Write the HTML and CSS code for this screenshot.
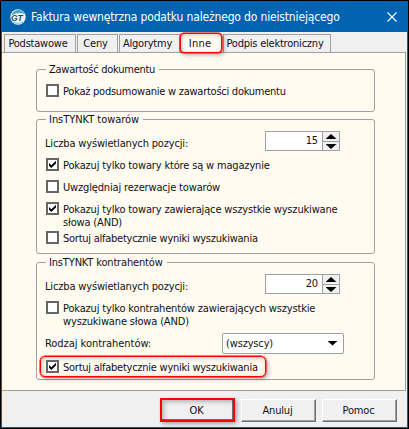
FILE: index.html
```html
<!DOCTYPE html>
<html lang="pl">
<head>
    <meta charset="UTF-8">
    <title>Faktura wewnętrzna</title>
    <link rel="stylesheet" href="styles.css">
</head>
<body>
    <div class="window">
        <div class="title-bar">
            <svg class="logo" width="16" height="16" viewBox="0 0 16 16">
                <circle cx="8" cy="8" r="7.7" fill="#eef6fa"/>
                <path d="M1.5 6.5 Q3 1 8.5 1 Q13 1 14.5 5 Q8 2.5 1.5 6.5Z" fill="#4aa5bb"/>
                <path d="M3 13.5 Q8 15.5 13 13" stroke="#7dbccb" fill="none"/>
                <text x="1" y="12" class="logo-text">GT</text>
            </svg>
            <span class="title">Faktura wewnętrzna podatku należnego do nieistniejącego</span>
            <svg class="close" width="10" height="10" viewBox="0 0 10 10">
                <path d="M0.5 0.5 L9.5 9.5 M9.5 0.5 L0.5 9.5" stroke="#fff" stroke-width="1.1"/>
            </svg>
        </div>

        <div class="tabs">
            <div class="tab tab-basic">Podstawowe</div>
            <div class="tab tab-prices">Ceny</div>
            <div class="tab tab-algo">Algorytmy</div>
            <div class="tab tab-other active">Inne</div>
            <div class="tab tab-sign">Podpis elektroniczny</div>
        </div>

        <div class="page">
            <div class="group group-doc">
                <div class="legend tight">Zawartość dokumentu</div>
                <label class="check"><i class="box"></i><span class="tight">Pokaż podsumowanie w zawartości dokumentu</span></label>
            </div>

            <div class="group group-goods">
                <div class="legend wide">InsTYNKT towarów</div>
                <div class="field">
                    <span>Liczba wyświetlanych pozycji:</span>
                    <div class="spinner">
                        <span class="value">15</span>
                        <div class="arrows"><i class="up"></i><i class="down"></i></div>
                    </div>
                </div>
                <label class="check"><i class="box checked"></i><span>Pokazuj tylko towary które są w magazynie</span></label>
                <label class="check"><i class="box"></i><span>Uwzględniaj rezerwacje towarów</span></label>
                <label class="check double"><i class="box checked"></i><span>Pokazuj tylko towary zawierające wszystkie wyszukiwane<br>słowa (AND)</span></label>
                <label class="check"><i class="box"></i><span class="tight">Sortuj alfabetycznie wyniki wyszukiwania</span></label>
            </div>

            <div class="group group-clients">
                <div class="legend">InsTYNKT kontrahentów</div>
                <div class="field">
                    <span>Liczba wyświetlanych pozycji:</span>
                    <div class="spinner">
                        <span class="value">20</span>
                        <div class="arrows"><i class="up"></i><i class="down"></i></div>
                    </div>
                </div>
                <label class="check double"><i class="box"></i><span>Pokazuj tylko kontrahentów zawierających wszystkie<br>wyszukiwane słowa (AND)</span></label>
                <div class="field kind">
                    <span class="wide">Rodzaj kontrahentów:</span>
                    <div class="select"><span>(wszyscy)</span><i class="down"></i></div>
                </div>
                <label class="check marked"><i class="box checked"></i><span class="tight">Sortuj alfabetycznie wyniki wyszukiwania</span></label>
            </div>
        </div>

        <div class="footer">
            <button class="btn primary">OK</button>
            <button class="btn">Anuluj</button>
            <button class="btn">Pomoc</button>
        </div>
    </div>
</body>
</html>
```

FILE: styles.css
```css
* {
    box-sizing: border-box;
}

body {
    margin: 0;
    width: 409px;
    height: 429px;
    overflow: hidden;
    background: #000;
    font: 11px/13px "DejaVu Sans Condensed", "DejaVu Sans", sans-serif;
    font-stretch: condensed;
    letter-spacing: -0.16px;
    color: #101018;
    white-space: nowrap;
}

.tight {
    letter-spacing: -0.25px;
}

.wide {
    letter-spacing: -0.04px;
}

.window {
    width: 407px;
    height: 427px;
    margin: 1px;
    border: 1px solid #0063b1;
    background: #f0f0f0;
    display: flex;
    flex-direction: column;
}

.title-bar {
    height: 30px;
    padding: 0 10px 0 8px;
    background: #0063b1;
    color: #fff;
    display: flex;
    align-items: center;
}

.logo-text {
    font: italic bold 8.5px "Liberation Sans", sans-serif;
    letter-spacing: 0;
    fill: #174f70;
}

.title {
    flex: 1;
    margin-left: 5px;
    padding-top: 1px;
    font-size: 12px;
}

/* Tabs */
.tabs {
    height: 20px;
    padding: 2px 0 0 2px;
    display: flex;
    gap: 1px;
}

.tab {
    height: 18px;
    line-height: 17px;
    padding-right: 4px;
    border: 1px solid #a0a0a0;
    border-bottom: none;
    text-align: center;
    letter-spacing: -0.22px;
}

.tab-basic {
    width: 72px;
}

.tab-prices {
    width: 41px;
}

.tab-algo {
    width: 61px;
}

.tab-other {
    width: 42px;
}

.tab-sign {
    width: 108px;
}

.tab.active {
    height: 20px;
    margin: -1px 0 0 -1px;
    padding-right: 2px;
    line-height: 19px;
    letter-spacing: 0.2px;
    border: 1px solid #f00;
    border-radius: 4px;
    background: #fffbf0;
    box-shadow: 0 0 0 0.5px #f00, 2px 2px 4px rgba(0, 0, 0, 0.3), inset 1px 1px 4px rgba(0, 0, 0, 0.2);
    z-index: 1;
}

/* Settings page */
.page {
    width: 404px;
    height: 339px;
    padding: 16px 30px 0 34px;
    border: 1px solid #a0a0a0;
    border-left: none;
    background: #fffbf0;
}

.group {
    width: 339px;
    border: 1px solid #a0a0a0;
    border-radius: 3px;
    padding-left: 9px;
}

.group-doc {
    height: 43px;
    margin-bottom: 7px;
}

.group-goods {
    height: 135px;
    margin-bottom: 8px;
}

.group-clients {
    height: 118px;
}

.legend {
    width: fit-content;
    margin-top: -7px;
    padding: 0 4px 0 3px;
    background: #fffbf0;
}

.check {
    display: flex;
    gap: 4px;
    height: 22px;
}

.check span {
    padding-top: 1px;
}

.box {
    flex: none;
    width: 13px;
    height: 13px;
    border: 2px solid #666;
    background: #fff;
}

.box.checked::after {
    content: "";
    display: block;
    width: 9px;
    height: 9px;
    background: #000;
    clip-path: polygon(1px 3px, 3.3px 5.2px, 8px 0.8px, 8px 3.4px, 3.3px 8px, 1px 5.8px);
}

.group-doc .check {
    margin-top: 8px;
}

.check.double {
    height: 29px;
}

.field {
    width: 295px;
    height: 20px;
    display: flex;
    justify-content: space-between;
    align-items: center;
    margin: 5px 0 7px -1px;
}

.field > span {
    padding-top: 4px;
}

/* Number fields */
.spinner {
    width: 75px;
    height: 20px;
    border: 1px solid #a0a0a0;
    background: #fff;
    display: flex;
}

.value {
    flex: 1;
    padding-right: 4px;
    line-height: 18px;
    text-align: right;
}

.arrows {
    width: 17px;
    border-left: 1px solid #a0a0a0;
    background: linear-gradient(#a0a0a0, #a0a0a0) 0 9px / 100% 1px no-repeat #f0f0f0;
    display: grid;
    grid-template-rows: 9px 9px;
    justify-items: center;
    align-items: center;
}

.up,
.down {
    width: 11px;
    height: 5px;
    background: #000;
}

.up {
    clip-path: polygon(50% 0, 100% 100%, 0 100%);
}

.down {
    clip-path: polygon(0 0, 100% 0, 50% 100%);
}

.arrows .down {
    margin-top: 2px;
}

.field.kind {
    width: 299px;
    margin: 3px 0 3px -1px;
}

.field.kind > span {
    padding-top: 1px;
}

.select {
    width: 122px;
    height: 21px;
    padding: 0 5px 0 3px;
    border: 1px solid #a0a0a0;
    border-radius: 2px;
    background: #fff;
    display: flex;
    justify-content: space-between;
    align-items: center;
}

.marked {
    width: 226px;
    height: 21px;
    margin-left: -6px;
    padding: 3px 0 0 5px;
    border: 1px solid #f00;
    border-radius: 5px;
    box-shadow: 0 0 0 0.5px #f00, 2px 2px 4px rgba(0, 0, 0, 0.3), inset 1px 1px 4px rgba(0, 0, 0, 0.25);
}

/* Buttons */
.footer {
    height: 36px;
    padding: 8px 10px 0 0;
    display: flex;
    justify-content: flex-end;
    gap: 6px;
}

.btn {
    width: 75px;
    height: 23px;
    padding: 0 2px 0 0;
    border: 1px solid;
    border-color: #fff #707070 #707070 #fff;
    box-shadow: inset -1px -1px #a0a0a0;
    background: #f0f0f0;
    color: inherit;
    font: inherit;
    letter-spacing: inherit;
}

.btn.primary {
    height: 24px;
    margin-top: -1px;
    padding-top: 1px;
    border: 2px solid #f00;
    box-shadow: 2px 2px 4px rgba(0, 0, 0, 0.3), inset 2px 2px 4px rgba(0, 0, 0, 0.25), inset -1px -1px #707070;
}
```
